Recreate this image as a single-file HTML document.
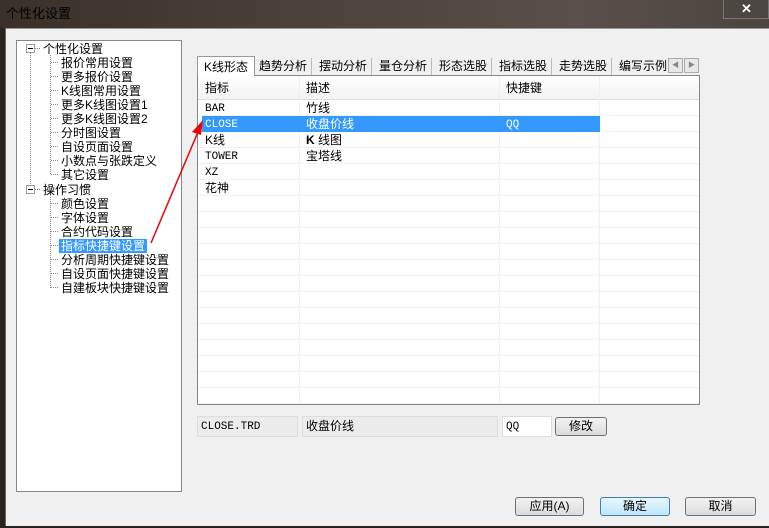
<!DOCTYPE html>
<html><head><meta charset="utf-8"><style>
*{margin:0;padding:0;box-sizing:border-box}
body{width:769px;height:528px;overflow:hidden;background:#2a231d;font-family:"Liberation Sans","Noto Sans CJK SC",sans-serif;font-size:12px;color:#000;position:relative}
.abs{position:absolute}
.title{left:0;top:0;width:769px;height:28px;background:linear-gradient(90deg,#3a302a,#4a423b 40%,#5a4f4a 75%,#4a4540);}
.client{left:5px;top:28px;width:764px;height:498px;background:#f0f0f0;border-top:1px solid #999;border-left:1px solid #666}
.tree{left:16px;top:40px;width:166px;height:452px;background:#fff;border:1px solid #828790}
.t{position:absolute;white-space:nowrap;line-height:14px;font-size:12px}
.mono{font-family:"Liberation Mono","Noto Sans CJK SC",monospace;font-size:11px}
.tab{position:absolute;top:58px;height:17px;line-height:17px;font-size:12px;border-right:1px solid #bbb;padding:0 4px}
.list{left:197px;top:75px;width:503px;height:330px;background:#fff;border:1px solid #828790}
.row{position:absolute;left:0;width:501px;height:16px;border-bottom:1px solid #f0f0f0}
.vl{position:absolute;top:0;width:1px;height:328px;background:#f0f0f0}
.btn{position:absolute;height:19px;border:1px solid #707070;border-radius:3px;background:linear-gradient(#f2f2f2,#dcdcdc);text-align:center;line-height:17px;font-size:12px}
</style></head><body>
<div class="abs title"><span class="t" style="left:6px;top:7px;color:#000;font-size:13px">个性化设置</span>
<div class="abs" style="left:723px;top:0;width:46px;height:19px;border:1px solid #777;border-top:none"><span class="t" style="left:17px;top:2px;color:#fff;font-weight:bold;font-size:13px">✕</span></div></div>
<div class="abs client"></div>
<div class="abs tree">
<svg class="abs" style="left:0;top:0" width="166" height="452">
<g stroke="#888" stroke-dasharray="1,1" fill="none">
<line x1="13.5" y1="12" x2="13.5" y2="148"/>
<line x1="33.5" y1="14" x2="33.5" y2="134"/>
<line x1="33.5" y1="156" x2="33.5" y2="247"/>
</g>
<g stroke="#888" stroke-dasharray="1,1">
<line x1="34" y1="21.5" x2="42" y2="21.5"/><line x1="34" y1="35.5" x2="42" y2="35.5"/><line x1="34" y1="49.5" x2="42" y2="49.5"/><line x1="34" y1="63.5" x2="42" y2="63.5"/><line x1="34" y1="77.5" x2="42" y2="77.5"/><line x1="34" y1="91.5" x2="42" y2="91.5"/><line x1="34" y1="105.5" x2="42" y2="105.5"/><line x1="34" y1="119.5" x2="42" y2="119.5"/><line x1="34" y1="133.5" x2="42" y2="133.5"/>
<line x1="34" y1="162.5" x2="42" y2="162.5"/><line x1="34" y1="176.5" x2="42" y2="176.5"/><line x1="34" y1="190.5" x2="42" y2="190.5"/><line x1="34" y1="204.5" x2="42" y2="204.5"/><line x1="34" y1="218.5" x2="42" y2="218.5"/><line x1="34" y1="232.5" x2="42" y2="232.5"/><line x1="34" y1="246.5" x2="42" y2="246.5"/>
<line x1="18" y1="7.5" x2="24" y2="7.5"/><line x1="18" y1="148.5" x2="24" y2="148.5"/>
</g>
<rect x="9.5" y="3.5" width="8" height="8" fill="#fff" stroke="#999"/><line x1="11" y1="7.5" x2="16" y2="7.5" stroke="#000"/>
<rect x="9.5" y="144.5" width="8" height="8" fill="#fff" stroke="#999"/><line x1="11" y1="148.5" x2="16" y2="148.5" stroke="#000"/>
</svg>
<span class="t" style="left:26px;top:1px">个性化设置</span>
<span class="t" style="left:44px;top:15px">报价常用设置</span>
<span class="t" style="left:44px;top:29px">更多报价设置</span>
<span class="t" style="left:44px;top:43px">K线图常用设置</span>
<span class="t" style="left:44px;top:57px">更多K线图设置1</span>
<span class="t" style="left:44px;top:71px">更多K线图设置2</span>
<span class="t" style="left:44px;top:85px">分时图设置</span>
<span class="t" style="left:44px;top:99px">自设页面设置</span>
<span class="t" style="left:44px;top:113px">小数点与张跌定义</span>
<span class="t" style="left:44px;top:127px">其它设置</span>
<span class="t" style="left:26px;top:142px">操作习惯</span>
<span class="t" style="left:44px;top:156px">颜色设置</span>
<span class="t" style="left:44px;top:170px">字体设置</span>
<span class="t" style="left:44px;top:184px">合约代码设置</span>
<span class="t" style="left:42px;top:198px;background:#3399ff;color:#fff;padding:0 2px">指标快捷键设置</span>
<span class="t" style="left:44px;top:212px">分析周期快捷键设置</span>
<span class="t" style="left:44px;top:226px">自设页面快捷键设置</span>
<span class="t" style="left:44px;top:240px">自建板块快捷键设置</span>
</div>
<div class="abs" style="left:197px;top:56px;width:58px;height:20px;background:#fff;border:1px solid #999;border-bottom:none;z-index:2"><span class="t" style="left:6px;top:3px">K线形态</span></div>
<span class="tab" style="left:255px">趋势分析</span>
<span class="tab" style="left:315px">摆动分析</span>
<span class="tab" style="left:375px">量仓分析</span>
<span class="tab" style="left:435px">形态选股</span>
<span class="tab" style="left:495px">指标选股</span>
<span class="tab" style="left:555px">走势选股</span>
<span class="tab" style="left:615px;border:none">编写示例</span>
<div class="abs" style="left:668px;top:58px;width:15px;height:15px;border:1px solid #aaa;background:#e8e8e8;font-size:7px;text-align:center;line-height:13px;color:#888">◀</div>
<div class="abs" style="left:684px;top:58px;width:15px;height:15px;border:1px solid #aaa;background:#e8e8e8;font-size:7px;text-align:center;line-height:13px;color:#888">▶</div>
<div class="abs list">
<div class="abs" style="left:0;top:0;width:501px;height:24px;background:linear-gradient(#fff,#f3f3f3);border-bottom:1px solid #ddd"></div>
<div class="vl" style="left:101px"></div><div class="vl" style="left:301px"></div><div class="vl" style="left:401px"></div>
<div class="row" style="top:24px"></div><div class="row" style="top:40px"></div><div class="row" style="top:56px"></div><div class="row" style="top:72px"></div><div class="row" style="top:88px"></div><div class="row" style="top:104px"></div><div class="row" style="top:120px"></div><div class="row" style="top:136px"></div><div class="row" style="top:152px"></div><div class="row" style="top:168px"></div><div class="row" style="top:184px"></div><div class="row" style="top:200px"></div><div class="row" style="top:216px"></div><div class="row" style="top:232px"></div><div class="row" style="top:248px"></div><div class="row" style="top:264px"></div><div class="row" style="top:280px"></div><div class="row" style="top:296px"></div><div class="row" style="top:312px"></div>
<div class="abs" style="left:4px;top:40px;width:398px;height:16px;background:#3399ff"></div>
<span class="t" style="left:7px;top:5px">指标</span><span class="t" style="left:108px;top:5px">描述</span><span class="t" style="left:308px;top:5px">快捷键</span>
<span class="t mono" style="left:7px;top:26px">BAR</span><span class="t" style="left:108px;top:25px">竹线</span>
<span class="t mono" style="left:7px;top:42px;color:#fff">CLOSE</span><span class="t" style="left:108px;top:41px;color:#fff">收盘价线</span><span class="t mono" style="left:308px;top:42px;color:#fff">QQ</span>
<span class="t" style="left:7px;top:57px">K线</span><span class="t" style="left:108px;top:57px"><b>K</b> 线图</span>
<span class="t mono" style="left:7px;top:74px">TOWER</span><span class="t" style="left:108px;top:73px">宝塔线</span>
<span class="t mono" style="left:7px;top:90px">XZ</span>
<span class="t" style="left:7px;top:105px">花神</span>
</div>
<div class="abs" style="left:197px;top:416px;width:101px;height:21px;background:#ececec;border:1px solid #ddd"><span class="t mono" style="left:3px;top:3px">CLOSE.TRD</span></div>
<div class="abs" style="left:302px;top:416px;width:196px;height:21px;background:#ececec;border:1px solid #ddd"><span class="t" style="left:3px;top:2px">收盘价线</span></div>
<div class="abs" style="left:502px;top:416px;width:50px;height:21px;background:#fff;border:1px solid #ddd"><span class="t mono" style="left:3px;top:3px">QQ</span></div>
<div class="btn" style="left:555px;top:417px;width:52px">修改</div>
<div class="btn" style="left:515px;top:497px;width:69px">应用(A)</div>
<div class="btn" style="left:600px;top:497px;width:70px;border-color:#3c7fb1;background:linear-gradient(#eaf6fd,#bee6fd)">确定</div>
<div class="btn" style="left:685px;top:497px;width:71px">取消</div>
<svg class="abs" style="left:0;top:0" width="769" height="528">
<line x1="151" y1="243" x2="198" y2="132" stroke="#e00" stroke-width="1.5"/>
<polygon points="203,120 192,132 201,135" fill="#e00"/>
</svg>
</body></html>
